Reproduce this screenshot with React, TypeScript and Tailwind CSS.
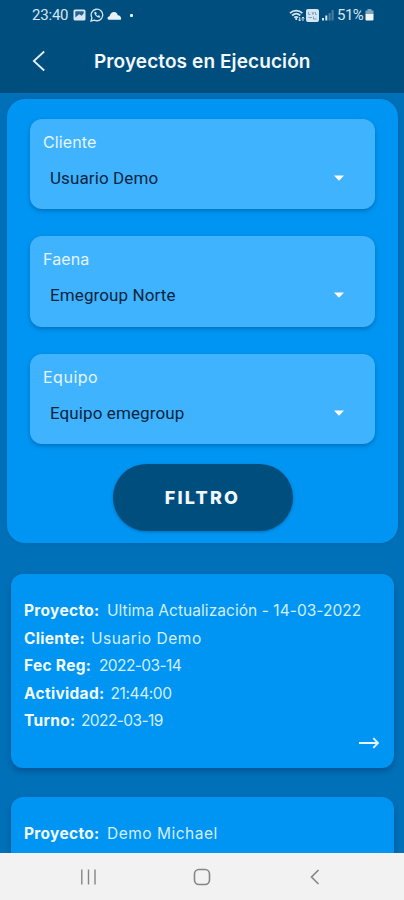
import { clsx } from 'clsx'

interface FilterField {
  label: string
  value: string
  labelClass: string
}

interface Row {
  label: string
  value: string
  labelClass: string
  valueClass: string
}

const FIELDS: FilterField[] = [
  { label: 'Cliente', value: 'Usuario Demo', labelClass: 'tracking-[0.1px]' },
  { label: 'Faena', value: 'Emegroup Norte', labelClass: 'tracking-[0.1px]' },
  { label: 'Equipo', value: 'Equipo emegroup', labelClass: 'tracking-[0.5px]' },
]

const PROJECT: Row[] = [
  { label: 'Proyecto:', value: 'Ultima Actualización - 14-03-2022', labelClass: 'w-[83px]', valueClass: 'tracking-[0.05px]' },
  { label: 'Cliente:', value: 'Usuario Demo', labelClass: 'w-[67px]', valueClass: 'tracking-[0.55px]' },
  { label: 'Fec Reg:', value: '2022-03-14', labelClass: 'w-[75px]', valueClass: 'tracking-[-0.6px]' },
  { label: 'Actividad:', value: '21:44:00', labelClass: 'w-[86.5px]', valueClass: 'tracking-[-0.4px]' },
  { label: 'Turno:', value: '2022-03-19', labelClass: 'w-[57px]', valueClass: 'tracking-[-0.6px]' },
]

const NEXT_PROJECT: Row[] = [
  { label: 'Proyecto:', value: 'Demo Michael', labelClass: 'w-[83px]', valueClass: 'tracking-[0.5px]' },
]

function StatusBar() {
  return (
    <div className="flex h-[30px] items-center justify-between pl-[32px] pr-[30px] font-[Roboto,sans-serif] text-[15px] text-[#d5e6f2]">
      <div className="flex items-center">
        <span className="w-[41px] tracking-[-0.2px]">23:40</span>
        <svg width="13" height="12" viewBox="0 0 13 12">
          <rect x="0.5" y="0.5" width="12" height="11" rx="1.5" fill="#d5e6f2" />
          <path d="M2.3 8.5V2.3h8.4v2.2L8.6 6.8 6.2 5.2z" fill="#29668f" />
        </svg>
        <svg className="ml-[4px]" width="14" height="14" viewBox="0 0 14 14" fill="none" stroke="#d5e6f2">
          <path d="M1 13l.9-3.2A5.8 5.8 0 1 1 4.3 12.1z" strokeWidth="1.3" />
          <path d="M4.6 4.2c-.4 2.6 2.6 5.4 5.2 5.2l.2-1.3-1.5-.7-.8.7C6.8 7.7 6.1 7 5.9 6.2l.6-.8-.7-1.4z" fill="#d5e6f2" strokeWidth="0.4" />
        </svg>
        <svg className="ml-[3px]" width="15" height="9" viewBox="0 0 15 9" fill="#e6f2fa">
          <path d="M1.8 8.7C-.1 8.2.2 5.5 2.6 5.2 3.2 2.3 5.5.7 7.3 1c2 .1 3 1.500 3.500 3.300 2.200-.1 3.900 2 3.100 4.400z" />
        </svg>
        <span className="ml-[8px] h-[3px] w-[3px] rounded-[1px] bg-[#e6f2fa]" />
      </div>
      <div className="flex items-center">
        <svg width="16" height="13" viewBox="0 0 16 13" fill="none" stroke="#d5e6f2" strokeWidth="1.7">
          <path d="M1 4.2c3.6-3.4 8.8-3.4 12.4 0M3.1 6.5c2.5-2.3 5.7-2.3 8.2 0M5.2 8.700c1.300-1.100 2.700-1.100 4 0" />
          <path d="M7.2 9v2" />
          <path d="M10.7 8v4M9.3 10.5l1.4 1.5 1.3-1.5M14 12V8M12.7 9.500L14 8l1.300 1.500" strokeWidth="1" />
        </svg>
        <svg className="ml-[1px]" width="13" height="13" viewBox="0 0 13 13">
          <rect width="13" height="13" rx="2" fill="#d5e6f2" />
          <path d="M2.500 3v2.500h2M6 3l1 2.500L8 3M9.500 3v2.500h1.300M2.500 8.500h3.500M7.500 7.500v2.500h3" fill="none" stroke="#7fa5bf" strokeWidth="1" />
        </svg>
        <svg className="ml-[3px]" width="12" height="12" viewBox="0 0 12 12">
          <path d="M0 9h2v2.500H0zM3.300 6.500h2v5h-2z" fill="#d5e6f2" />
          <path d="M6.600 4h2v7.500h-2zM9.600 1h2v10.500h-2z" fill="#4b80a3" />
        </svg>
        <span className="ml-[3px] w-[27px] tracking-[-0.5px]">51%</span>
        <svg className="ml-[1px]" width="9" height="12" viewBox="0 0 9 12">
          <path d="M2.500 0h4v1.500h2v4H.5v-4h2z" fill="#7fa5bf" />
          <path d="M.5 5h8v5.500q0 1-1 1h-6q-1 0-1-1z" fill="#eef6fb" />
        </svg>
      </div>
    </div>
  )
}

function Field({ label, value, labelClass }: FilterField) {
  return (
    <div className="h-[90.5px] rounded-[12px] bg-[#40b3ff] pl-[13px] pr-[31px] shadow-[0_2px_4px_rgba(0,50,100,0.35)]">
      <div className="pt-[11px] text-[16px] leading-[24px] text-[#e4f5ff]">
        <span className={labelClass}>{label}</span>
      </div>
      <div className="mt-[12px] flex h-[24px] items-center justify-between pl-[7px] font-[Roboto,sans-serif] text-[17px] text-[#07253d]">
        <span className="pt-[2px] tracking-[0.1px]">{value}</span>
        <svg width="10" height="6" viewBox="0 0 10 6" fill="#fff">
          <path d="M0 0.5h10L5 5.7z" />
        </svg>
      </div>
    </div>
  )
}

function ProjectCard({ rows, arrow }: { rows: Row[]; arrow?: boolean }) {
  return (
    <div className="flex h-[194px] shrink-0 flex-col rounded-[12px] bg-[#0095f2] px-[13px] pt-[23px] shadow-[0_3px_6px_rgba(0,40,90,0.4)]">
      {rows.map((row) => (
        <div key={row.label} className="flex h-[27.5px] items-center whitespace-nowrap text-[15.5px]">
          <span className={clsx('shrink-0 font-bold tracking-[0.3px] text-[#f0faff]', row.labelClass)}>{row.label}</span>
          <span className={clsx('text-[#d3eeff]', row.valueClass)}>{row.value}</span>
        </div>
      ))}
      {arrow && (
        <svg className="mt-[1px] self-end" width="23" height="14" viewBox="0 0 23 14" fill="none" stroke="#e4f5ff" strokeWidth="1.8">
          <path d="M1 7h19M15.300 2.200L20 7l-4.700 4.800" />
        </svg>
      )}
    </div>
  )
}

export default function App() {
  return (
    <div className="flex h-[900px] w-[404px] flex-col overflow-hidden bg-[#0071b9] font-[Inter,sans-serif]">
      <header className="h-[93px] shrink-0 bg-[#004e7d]">
        <StatusBar />
        <div className="flex h-[62px] items-center pl-[32px]">
          <svg width="14" height="22" viewBox="0 0 14 22" fill="none" stroke="#e3eff7" strokeWidth="1.8">
            <path d="M12.200 1.500L1.800 11l10.400 9.500" />
          </svg>
          <h1 className="ml-[48px] whitespace-nowrap pt-[2px] text-[19px] font-semibold tracking-[0.1px] text-[#f2f8fc]">
            Proyectos en Ejecución
          </h1>
        </div>
      </header>

      <main className="flex min-h-0 flex-1 flex-col overflow-hidden">
        <section className="ml-[7px] mr-[6px] mt-[6px] h-[444px] shrink-0 rounded-[18px] bg-[#0095f2] px-[23px] pt-[19.5px] shadow-[0_0_4px_rgba(0,60,120,0.3)]">
          <div className="flex flex-col gap-[27px]">
            {FIELDS.map((field) => (
              <Field key={field.label} {...field} />
            ))}
          </div>
          <div className="mt-[19.5px] flex justify-center">
            <button className="h-[67px] w-[180px] rounded-full bg-[#004e7d] pt-[1px] text-[18px] font-extrabold tracking-[2.2px] text-[#f2f8fc] shadow-[0_1px_3px_rgba(0,50,100,0.4)]">
              FILTRO
            </button>
          </div>
        </section>

        <div className="mt-[31px] flex flex-col gap-[29px] pl-[11px] pr-[10px]">
          <ProjectCard rows={PROJECT} arrow />
          <ProjectCard rows={NEXT_PROJECT} />
        </div>
      </main>

      <nav className="flex h-[47px] shrink-0 items-center bg-[#f2f2f2] pl-[80px]">
        <svg width="16" height="16" viewBox="0 0 16 16" fill="none" stroke="#858585" strokeWidth="1.4">
          <path d="M1.800 0.500v15M8.500 0.500v15M15 0.500v15" />
        </svg>
        <svg className="ml-[96.5px]" width="18" height="18" viewBox="0 0 18 18" fill="none" stroke="#858585" strokeWidth="1.6">
          <rect x="1.5" y="1.5" width="15" height="15" rx="4.5" />
        </svg>
        <svg className="ml-[99.5px]" width="10" height="16" viewBox="0 0 10 16" fill="none" stroke="#858585" strokeWidth="1.6">
          <path d="M8.500 1L1.500 8l7 7" />
        </svg>
      </nav>
    </div>
  )
}
